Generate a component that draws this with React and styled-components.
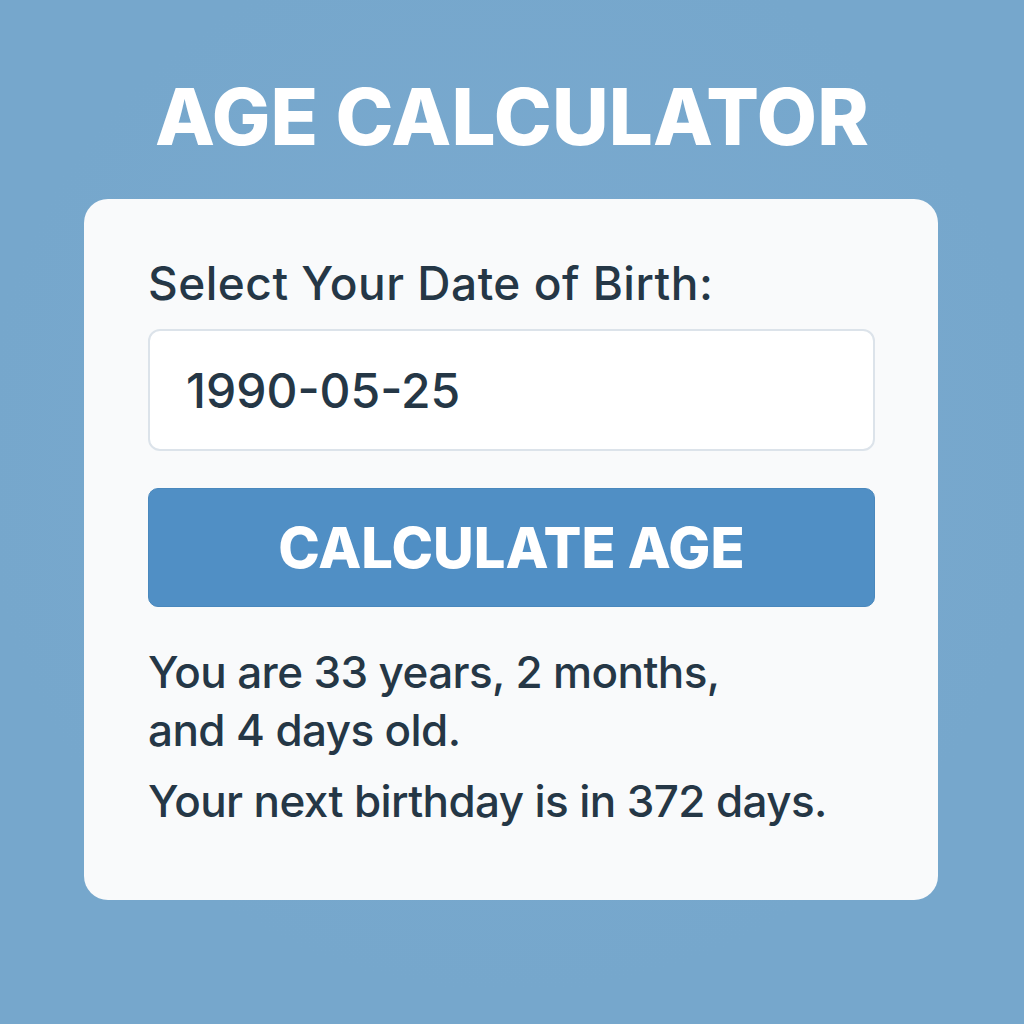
import React, { useState } from 'react';
import styled, { createGlobalStyle } from 'styled-components';

const GlobalStyle = createGlobalStyle`
  html, body {
    margin: 0;
    padding: 0;
    background: #77a8cd;
  }
  body {
    font-family: Inter, "Noto Sans", sans-serif;
    color: #253746;
  }
`;

const Page = styled.div`
  width: 1024px;
  height: 1024px;
  box-sizing: border-box;
  padding-top: 70px;
  display: flex;
  flex-direction: column;
  align-items: center;
  background: radial-gradient(circle at 50% 45%, #7baad0 0%, #76a7cc 70%);
`;

const Title = styled.h1`
  margin: 0 0 35px;
  font-size: 78px;
  line-height: 94px;
  font-weight: 800;
  color: #ffffff;
  letter-spacing: 0.2px;
`;

const Card = styled.div`
  width: 854px;
  height: 701px;
  box-sizing: border-box;
  margin-left: -2px;
  padding: 56px 63px 0 64px;
  background: #f9fafb;
  border-radius: 24px;
  display: flex;
  flex-direction: column;
`;

const Label = styled.label`
  font-size: 46px;
  line-height: 56px;
  font-weight: 500;
  letter-spacing: 0.5px;
  margin-bottom: 18px;
`;

const DateInput = styled.input`
  height: 122px;
  box-sizing: border-box;
  border: 2px solid #dce3ea;
  border-radius: 12px;
  background: #ffffff;
  padding: 0 36px;
  font-family: inherit;
  font-size: 48px;
  font-weight: 500;
  color: #253746;
  outline: none;
  margin-bottom: 37px;
`;

const Button = styled.button`
  height: 119px;
  border: 1px solid #4a88bd;
  border-radius: 10px;
  background: #508fc5;
  color: #ffffff;
  font-family: inherit;
  font-size: 56px;
  font-weight: 800;
  cursor: pointer;
  margin-bottom: 36px;
`;

const Result = styled.p`
  margin: 0 0 ${p => p.$gap}px;
  font-size: 44px;
  line-height: 58px;
  font-weight: 500;
  letter-spacing: -0.6px;
  max-width: ${p => p.$wrap ? '600px' : 'none'};
`;

export default function App() {
  const [dob, setDob] = useState('1990-05-25');
  return (
    <>
      <GlobalStyle />
      <Page>
        <Title>AGE CALCULATOR</Title>
        <Card>
          <Label htmlFor="dob">Select Your Date of Birth:</Label>
          <DateInput id="dob" value={dob} onChange={e => setDob(e.target.value)} />
          <Button>CALCULATE AGE</Button>
          <Result $gap={13} $wrap>You are 33 years, 2 months, and 4 days old.</Result>
          <Result $gap={0}>Your next birthday is in 372 days.</Result>
        </Card>
      </Page>
    </>
  );
}
